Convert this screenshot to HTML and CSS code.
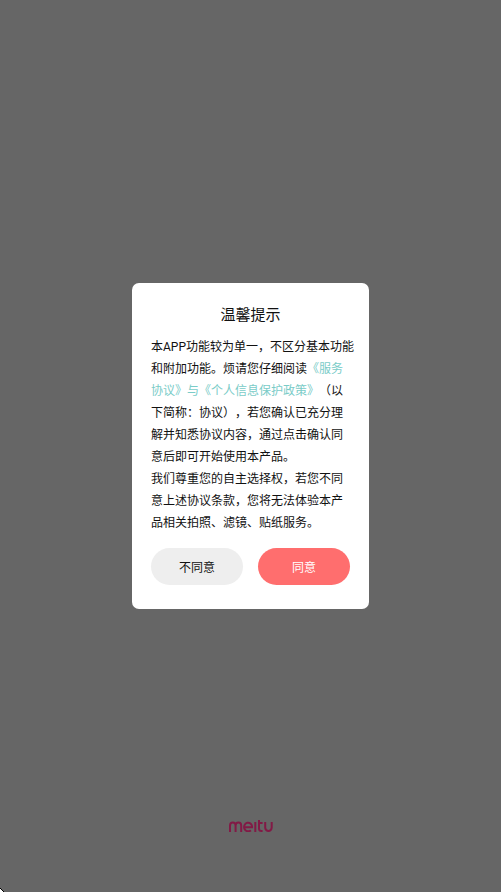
FILE: index.html
```html
<!DOCTYPE html>
<html lang="zh-CN">
<head>
<meta charset="utf-8">
<meta name="viewport" content="width=device-width, initial-scale=1">
<title>温馨提示</title>
<link rel="stylesheet" href="styles.css">
</head>
<body>
<main class="screen">
  <section class="dialog" role="dialog" aria-labelledby="dialog-title">
    <h1 class="title" id="dialog-title">温馨提示</h1>
    <div class="message">
      <p>本APP功能较为单一，不区分基本功能<br>和附加功能。烦请您仔细阅读<a href="#terms">《服务<br>协议》与《个人信息保护政策》</a>（以<br>下简称：协议），若您确认已充分理<br>解并知悉协议内容，通过点击确认同<br>意后即可开始使用本产品。</p>
      <p>我们尊重您的自主选择权，若您不同<br>意上述协议条款，您将无法体验本产<br>品相关拍照、滤镜、贴纸服务。</p>
    </div>
    <div class="actions">
      <button class="button" type="button">不同意</button>
      <button class="button primary" type="button">同意</button>
    </div>
  </section>
  <footer class="brand">
    <svg class="logo" viewBox="0 0 44 12" role="img" aria-label="meitu">
      <path d="M1 12V5.800a2.800 3.200 0 0 1 5.600 0V12M6.600 5.800a2.800 3.200 0 0 1 5.600 0V12"/>
      <path d="M15.400 7.300H23.100A4 4.300 0 1 0 21.800 10.200"/>
      <path d="M26.300 2V12"/>
      <path d="M30 0V8.500Q30 11 32.400 11H33.600M30 3H33.600"/>
      <path d="M36.200 2V7.600a3.250 3.400 0 0 0 6.500 0V2"/>
    </svg>
  </footer>
  <svg class="corner" viewBox="0 0 4 4" aria-hidden="true">
    <path class="edge" d="M0 0H1V1H2V2H3V3H4V4H0Z"/>
    <path class="fill" d="M0 1H1V2H2V3H3V4H0Z"/>
  </svg>
</main>
</body>
</html>
```
FILE: styles.css
```css
* {
  box-sizing: border-box;
}

body {
  margin: 0;
  background: #666;
  color: #111;
  font-family: Roboto, "Noto Sans CJK SC", sans-serif;
  text-spacing-trim: space-all;
}

.screen {
  position: relative;
  display: grid;
  grid-template-rows: 1fr auto 1fr;
  justify-items: center;
  min-height: 100vh;
}

.dialog {
  grid-row: 2;
  padding: 20px 19px 24px;
  border-radius: 7px;
  background: #fff;
  width: 237px;
}

.title {
  margin: 0 0 9px;
  font-size: 15px;
  font-weight: 400;
  line-height: 24px;
  text-align: center;
}

.message {
  font-size: 12px;
  line-height: 22px;
  white-space: nowrap;
}

.message p {
  margin: 0;
}

.message a {
  color: #7accc8;
  text-decoration: none;
}

.actions {
  display: grid;
  grid-template-columns: 1fr 1fr;
  gap: 15px;
  margin-top: 14px;
}

.button {
  height: 37px;
  padding: 0;
  border: 0;
  border-radius: 19px;
  background: #eee;
  color: #111;
  font: inherit;
  font-size: 12px;
}

.primary {
  background: #ff6e6e;
  color: #fff;
}

.brand {
  grid-row: 3;
  align-self: end;
  padding-bottom: 60px;
}

.logo {
  display: block;
  width: 44px;
  height: 12px;
  fill: none;
  stroke: #821a46;
  stroke-width: 2;
}

.corner {
  position: absolute;
  bottom: 0;
  left: 0;
  width: 4px;
  height: 4px;
}

.edge {
  fill: #000;
}

.fill {
  fill: #fff;
}
```
